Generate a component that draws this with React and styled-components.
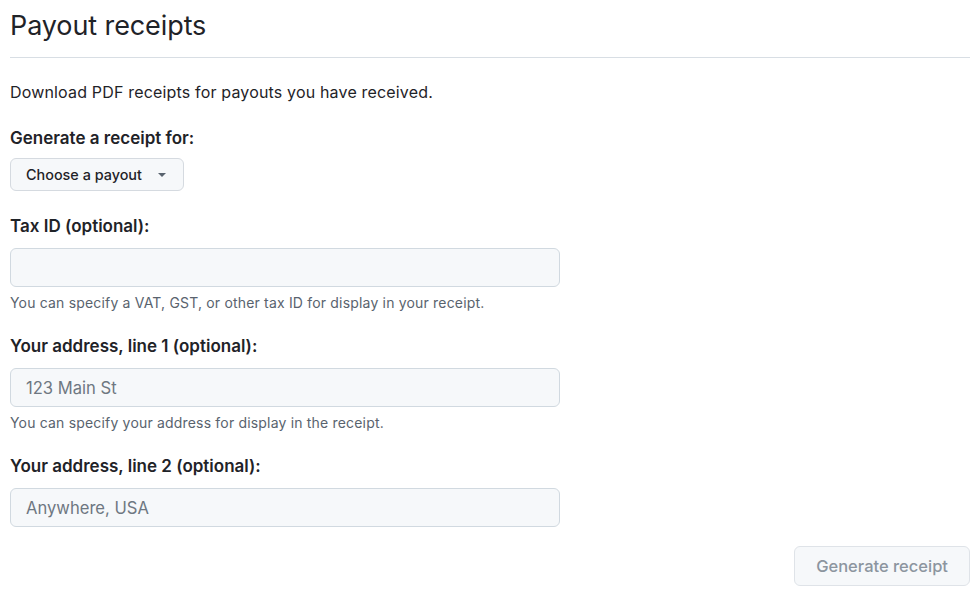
import React from "react";
import styled, { createGlobalStyle } from "styled-components";

const Global = createGlobalStyle`
  html, body { margin: 0; padding: 0; background: #ffffff; }
  body {
    font-family: Inter, "Noto Sans", "Liberation Sans", sans-serif;
    color: #1f2328;
    -webkit-font-smoothing: antialiased;
  }
  * { box-sizing: border-box; }
`;

const Page = styled.div`
  padding: 6px 5px 0 10px;
  width: 975px;
`;

const Subhead = styled.div`
  padding-bottom: 11px;
  border-bottom: 1px solid #d8dee4;
  margin-bottom: 22px;
`;

const Title = styled.h2`
  margin: 0;
  font-size: 27px;
  font-weight: 400;
  line-height: 40px;
  color: #1f2328;
  letter-spacing: -0.1px;
`;

const Lead = styled.p`
  margin: 0 0 22px;
  font-size: 16px;
  line-height: 24px;
  letter-spacing: 0.17px;
  color: #1f2328;
`;

const Form = styled.form`
  display: flex;
  flex-direction: column;
`;

const Group = styled.div`
  display: flex;
  flex-direction: column;
  align-items: flex-start;
  margin-bottom: ${(p) => p.$mb ?? 21}px;
`;

const Label = styled.label`
  font-size: 17px;
  font-weight: 600;
  line-height: 24px;
  color: #1f2328;
  margin-bottom: ${(p) => p.$mb ?? 10}px;
`;

const SelectButton = styled.button`
  display: inline-flex;
  align-items: center;
  gap: 16px;
  height: 33px;
  padding: 0 17px 0 15px;
  font-family: inherit;
  font-size: 14.4px;
  font-weight: 500;
  color: #1f2328;
  background: #f6f8fa;
  border: 1px solid #d5dae0;
  border-radius: 6px;
  cursor: pointer;
`;

const Caret = styled.span`
  display: inline-block;
  width: 0;
  height: 0;
  border-left: 4px solid transparent;
  border-right: 4px solid transparent;
  border-top: 4px solid #59636e;
  margin-top: 1px;
`;

const Input = styled.input`
  width: 550px;
  height: 39px;
  padding: 0 15px;
  font-family: inherit;
  font-size: 16.6px;
  color: #1f2328;
  background: #f6f8fa;
  border: 1px solid #d1d9e0;
  border-radius: 6px;
  outline: none;
  &::placeholder { color: #6e7781; }
`;

const Note = styled.p`
  margin: 6px 0 0;
  font-size: 14px;
  line-height: 20px;
  letter-spacing: 0.18px;
  color: #59636e;
`;

const Actions = styled.div`
  display: flex;
  justify-content: flex-end;
  margin-top: 19px;
`;

const SubmitButton = styled.button`
  height: 40px;
  padding: 0 21px;
  font-family: inherit;
  font-size: 16.5px;
  font-weight: 500;
  color: #8c959f;
  background: #f6f8fa;
  border: 1px solid #dfe3e8;
  border-radius: 6px;
`;

export default function App() {
  return (
    <>
      <Global />
      <Page>
        <Subhead>
          <Title>Payout receipts</Title>
        </Subhead>
        <Lead>Download PDF receipts for payouts you have received.</Lead>
        <Form onSubmit={(e) => e.preventDefault()}>
          <Group $mb={23}>
            <Label $mb={8}>Generate a receipt for:</Label>
            <SelectButton type="button">
              Choose a payout
              <Caret />
            </SelectButton>
          </Group>
          <Group>
            <Label>Tax ID (optional):</Label>
            <Input type="text" />
            <Note>You can specify a VAT, GST, or other tax ID for display in your receipt.</Note>
          </Group>
          <Group>
            <Label>Your address, line 1 (optional):</Label>
            <Input type="text" placeholder="123 Main St" />
            <Note>You can specify your address for display in the receipt.</Note>
          </Group>
          <Group $mb={0}>
            <Label>Your address, line 2 (optional):</Label>
            <Input type="text" placeholder="Anywhere, USA" />
          </Group>
          <Actions>
            <SubmitButton type="submit" disabled>
              Generate receipt
            </SubmitButton>
          </Actions>
        </Form>
      </Page>
    </>
  );
}
